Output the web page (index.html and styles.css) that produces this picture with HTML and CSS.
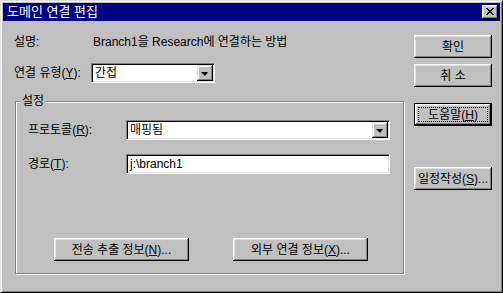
FILE: index.html
```html
<!DOCTYPE html>
<html lang="ko">
<head>
    <meta charset="UTF-8">
    <title>도메인 연결 편집</title>
    <link rel="stylesheet" href="styles.css">
</head>
<body>
<div class="window">
    <div class="titlebar">
        <span class="title">도메인 연결 편집</span>
        <span class="close">
            <svg width="8" height="7" viewBox="0 0 8 7">
                <path d="M0 0h2v1H0zM6 0h2v1H6zM1 1h2v1H1zM5 1h2v1H5zM2 2h4v1H2zM3 3h2v1H3zM2 4h4v1H2zM1 5h2v1H1zM5 5h2v1H5zM0 6h2v1H0zM6 6h2v1H6z" fill="#000"/>
            </svg>
        </span>
    </div>
    <div class="content">
        <div class="main">
            <div class="row desc">
                <span class="label">설명:</span>
                <span>Branch1을 Research에 연결하는 방법</span>
            </div>
            <div class="row type">
                <span class="label">연결 유형(<u>Y</u>):</span>
                <div class="field combo type-combo">
                    <span class="value">간접</span>
                    <span class="drop"><i class="arrow"></i></span>
                </div>
            </div>
            <div class="group">
                <div class="legend">설정</div>
                <div class="group-row">
                    <span class="group-label">프로토콜(<u>R</u>):</span>
                    <div class="field combo wide">
                        <span class="value">매핑됨</span>
                        <span class="drop"><i class="arrow"></i></span>
                    </div>
                </div>
                <div class="group-row second">
                    <span class="group-label">경로(<u>T</u>):</span>
                    <div class="field wide">
                        <span class="value">j:\branch1</span>
                    </div>
                </div>
                <div class="group-buttons">
                    <button class="btn wide-btn" type="button">전송 추출 정보(<u>N</u>)...</button>
                    <button class="btn wide-btn" type="button">외부 연결 정보(<u>X</u>)...</button>
                </div>
            </div>
        </div>
        <div class="side">
            <button class="btn" type="button">확인</button>
            <button class="btn cancel" type="button">취 소</button>
            <button class="btn default help" type="button"><span class="focus">도움말(<u>H</u>)</span></button>
            <button class="btn schedule" type="button">일정작성(<u>S</u>)...</button>
        </div>
    </div>
</div>
</body>
</html>
```

FILE: styles.css
```css
html, body {
    margin: 0;
    padding: 0;
    background: #c0c0c0;
}

body {
    font: normal 12px/1 "Liberation Sans", "Noto Sans CJK KR", sans-serif;
    color: #000;
}

.window {
    width: 503px;
    height: 293px;
    box-sizing: border-box;
    background: #c0c0c0;
    border: 1px solid;
    border-color: #dfdfdf #000 #000 #dfdfdf;
    box-shadow: inset 1px 1px #fff, inset -1px -1px #808080;
    padding: 2px;
}

/* 标题栏 */
.titlebar {
    height: 18px;
    background: #000080;
    color: #fff;
    display: flex;
    align-items: center;
    justify-content: space-between;
    padding: 0 2px 0 4px;
}

.title {
    font-size: 13px;
    line-height: 18px;
}

.close {
    width: 16px;
    height: 14px;
    box-sizing: border-box;
    background: #c0c0c0;
    box-shadow: inset -1px -1px #000, inset 1px 1px #fff, inset -2px -2px #808080, inset 2px 2px #dfdfdf;
    display: flex;
    align-items: center;
    justify-content: center;
    padding: 0 1px 1px 0;
}

.close svg {
    display: block;
}

.content {
    display: flex;
}

.main {
    flex: 1;
    padding-left: 11px;
}

.row {
    display: flex;
    align-items: center;
}

.desc {
    margin-top: 12px;
    height: 17px;
}

.desc .label {
    width: 79px;
}

.type {
    margin-top: 13px;
    height: 20px;
}

.type .label {
    width: 77px;
}

/* 输入框 */
.field {
    box-sizing: border-box;
    height: 20px;
    background: #fff;
    border: 1px solid;
    border-color: #808080 #fff #fff #808080;
    box-shadow: inset 1px 1px #000, inset -1px -1px #dfdfdf;
    display: flex;
    align-items: center;
    padding: 2px 2px 2px 3px;
}

.field .value {
    flex: 1;
}

.type-combo {
    width: 124px;
}

.wide {
    width: 264px;
}

.drop {
    width: 16px;
    height: 16px;
    box-sizing: border-box;
    margin-right: -1px;
    background: #c0c0c0;
    box-shadow: inset -1px -1px #000, inset 1px 1px #dfdfdf, inset -2px -2px #808080, inset 2px 2px #fff;
    display: flex;
    align-items: center;
    justify-content: center;
}

.arrow {
    width: 0;
    height: 0;
    border-left: 4px solid transparent;
    border-right: 3px solid transparent;
    border-top: 4px solid #000;
    margin: 1px 1px 0 0;
}

/* 设置分组 */
.group {
    margin: 18px 0 0 1px;
    width: 389px;
    height: 173px;
    box-sizing: border-box;
    border: 1px solid #808080;
    box-shadow: inset 1px 1px #fff, 1px 1px #fff;
    display: flex;
    flex-direction: column;
}

.legend {
    align-self: flex-start;
    margin: -8px 0 0 4px;
    padding: 0 2px;
    height: 14px;
    line-height: 14px;
    background: #c0c0c0;
}

.group-row {
    display: flex;
    align-items: center;
    padding-left: 12px;
    margin-top: 12px;
}

.group-row.second {
    margin-top: 14px;
}

.group-label {
    width: 98px;
}

.group-buttons {
    display: flex;
    gap: 44px;
    padding-left: 38px;
    margin-top: 64px;
}

/* 按钮 */
.btn {
    width: 78px;
    height: 23px;
    box-sizing: border-box;
    padding: 0;
    margin: 0;
    border: none;
    background: #c0c0c0;
    box-shadow: inset -1px -1px #000, inset 1px 1px #fff, inset -2px -2px #808080, inset 2px 2px #dfdfdf;
    font: normal 12px/1 "Liberation Sans", "Noto Sans CJK KR", sans-serif;
    color: #000;
    display: flex;
    align-items: center;
    justify-content: center;
}

.wide-btn {
    width: 135px;
}

.side {
    width: 78px;
    padding: 14px 8px 0 0;
    display: flex;
    flex-direction: column;
}

.cancel {
    margin-top: 6px;
}

.help {
    margin-top: 16px;
}

.schedule {
    margin-top: 41px;
}

.default {
    border: 1px solid #000;
}

.focus {
    flex: 1;
    align-self: stretch;
    margin: 3px;
    border: 1px dotted #000;
    display: flex;
    align-items: center;
    justify-content: center;
}
```
